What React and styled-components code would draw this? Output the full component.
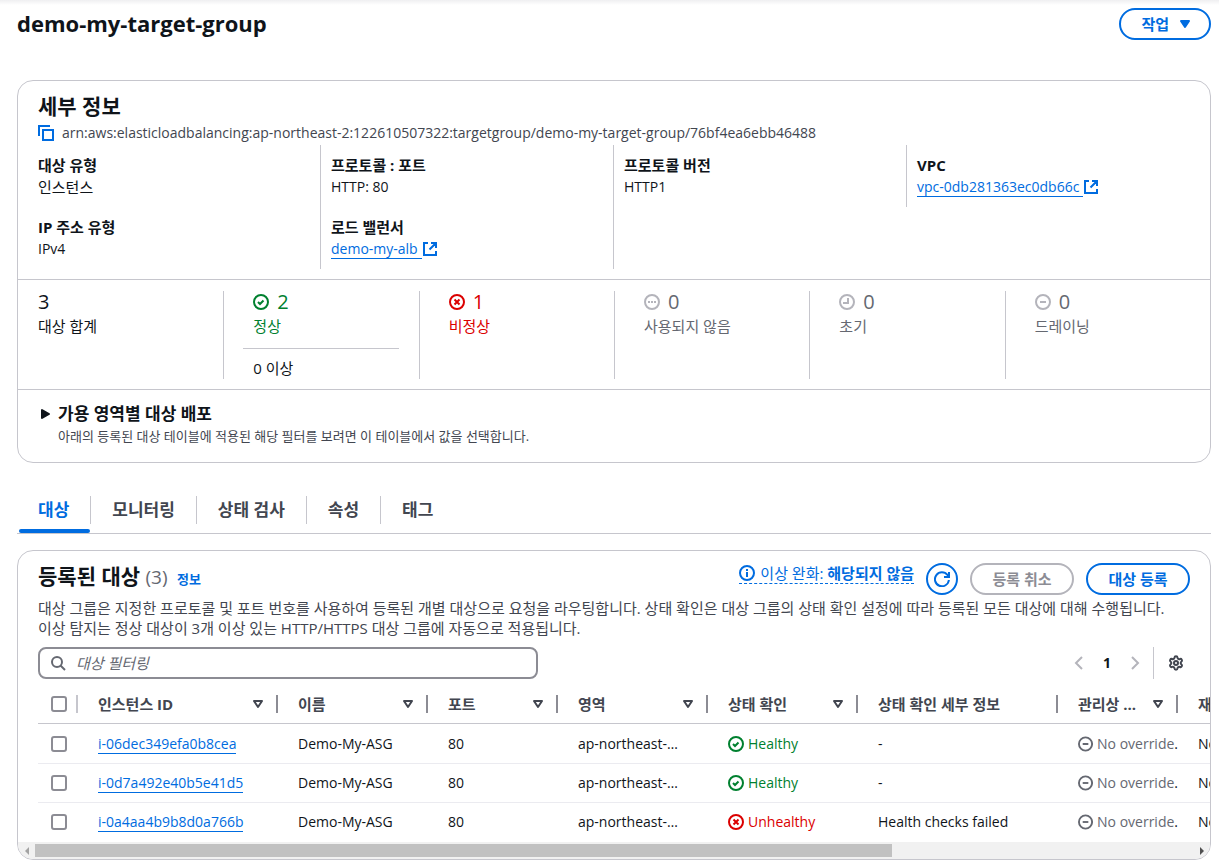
import React from "react";
import styled, { createGlobalStyle } from "styled-components";
import { Settings } from "lucide-react";

const GlobalStyle = createGlobalStyle`
  * {
    box-sizing: border-box;
  }
  body {
    margin: 0;
    background: #fff;
    color: #0f141a;
    font-family: "Open Sans", "Noto Sans CJK KR", sans-serif;
    font-size: 14px;
    line-height: 22px;
  }
  button,
  input {
    font-family: inherit;
  }
  h1, h2, h3, p, dl, dt, dd {
    margin: 0;
  }
`;

const Page = styled.main`
  padding: 8px 8px 5px 17px;
  background: linear-gradient(#efeff1, #fff) top / 100% 5px no-repeat;
  overflow: hidden;
`;

const PageHeader = styled.header`
  display: flex;
  align-items: flex-start;
  justify-content: space-between;
  height: 32px;
  margin-bottom: 40px;
  h1 {
    font-size: 22px;
    line-height: 30px;
    font-weight: 700;
  }
`;

const Button = styled.button`
  display: flex;
  align-items: center;
  justify-content: center;
  gap: 8px;
  min-width: ${(p) => (p.$menu ? "0" : "104px")};
  height: 32px;
  padding: ${(p) => (p.$menu ? "0 16px 0 20px" : "0 20px")};
  border: 2px solid #006ce0;
  border-radius: 20px;
  background: #fff;
  color: #006ce0;
  font-size: 15px;
  font-weight: 700;
  line-height: 20px;
  white-space: nowrap;
  &:disabled {
    border-color: #b4b4bb;
    color: #8c8c94;
  }
`;

const RoundButton = styled(Button)`
  width: 32px;
  min-width: 0;
  padding: 0;
`;

const Card = styled.section`
  border: 1px solid #c6c6cd;
  border-radius: 16px;
  background: #fff;
  overflow: hidden;
`;

const CardTitle = styled.h2`
  margin-bottom: 2px;
  font-size: 21px;
  line-height: 26px;
  font-weight: 700;
  span {
    color: #656871;
    font-size: 19px;
    font-weight: 400;
  }
  a {
    margin-left: 4px;
    color: #006ce0;
    font-size: 13px;
    text-decoration: none;
  }
`;

const CardTop = styled.div`
  padding: 12px 20px 0;
`;

const ArnRow = styled.div`
  display: flex;
  align-items: center;
  gap: 8px;
  height: 24px;
  color: #424650;
`;

const IconButton = styled.button`
  display: flex;
  align-items: center;
  justify-content: center;
  width: 16px;
  height: 16px;
  padding: 0;
  border: 0;
  background: none;
  color: ${(p) => p.$color || "#006ce0"};
`;

const Details = styled.div`
  display: grid;
  grid-template-columns: repeat(4, 1fr);
  align-items: start;
  padding: 0 10px 10px;
`;

const DetailColumn = styled.dl`
  border-right: 1px solid #c6c6cd;
  &:last-child {
    border-right: 0;
  }
  div {
    padding: 9px 10px;
  }
  dt {
    font-size: 15px;
    font-weight: 700;
  }
`;

const KoreanText = styled.span`
  display: block;
  font-size: 15px;
`;

const Link = styled.a`
  color: #006ce0;
  text-decoration: none;
  border-bottom: 1px solid #006ce0;
`;

const ExternalLink = styled.a`
  display: flex;
  align-items: center;
  height: 22px;
  color: #006ce0;
  text-decoration: none;
  span {
    padding-right: 4px;
    line-height: 19px;
    border-bottom: 1px solid #006ce0;
  }
`;

const Stats = styled.div`
  display: grid;
  grid-template-columns: repeat(6, 1fr);
  padding: 11px 10px 10px;
  border-top: 1px solid #c6c6cd;
`;

const Stat = styled.div`
  min-height: 88px;
  padding: 0 20px 0 19px;
  color: ${(p) => p.$color};
  border-left: 1px solid #c6c6cd;
  &:first-child {
    padding-left: 0;
    border-left: 0;
  }
`;

const StatValue = styled.div`
  display: flex;
  align-items: center;
  gap: 8px;
  height: 22px;
  padding-left: 10px;
  font-size: 20px;
  svg {
    color: ${(p) => p.$iconColor};
  }
`;

const StatLabel = styled.div`
  padding-left: 10px;
  font-size: 15px;
  line-height: 26px;
`;

const StatExtra = styled.div`
  margin-top: 9px;
  padding: 9px 0 1px 10px;
  border-top: 1px solid #c6c6cd;
  color: #0f141a;
  font-size: 15px;
  line-height: 20px;
`;

const Expandable = styled.div`
  display: grid;
  grid-template-columns: 20px 1fr;
  padding: 12px 20px 16px;
  border-top: 1px solid #c6c6cd;
  button {
    height: 24px;
  }
  h3 {
    font-size: 17px;
    line-height: 24px;
    font-weight: 700;
  }
  p {
    grid-column: 2;
    color: #424650;
    font-size: 13px;
    line-height: 20px;
  }
`;

const Tabs = styled.div`
  display: flex;
  margin: 33px 0 16px;
  border-bottom: 1px solid #c6c6cd;
`;

const Tab = styled.button`
  position: relative;
  height: 28px;
  margin-bottom: 9px;
  padding: 0 21px;
  border: 0;
  border-right: 1px solid #c6c6cd;
  background: none;
  color: ${(p) => (p.$active ? "#006ce0" : "#424650")};
  font-size: 17px;
  font-weight: 700;
  line-height: 28px;
  &:last-child {
    border-right: 0;
  }
  &:after {
    content: "";
    display: ${(p) => (p.$active ? "block" : "none")};
    position: absolute;
    left: 2px;
    right: 0;
    bottom: -9px;
    height: 4px;
    border-radius: 2px;
    background: #006ce0;
  }
`;

const TableHeader = styled.div`
  display: flex;
  justify-content: space-between;
  height: 35px;
`;

const Actions = styled.div`
  display: flex;
  align-items: flex-start;
  gap: 12px;
`;

const Mitigation = styled.button`
  display: flex;
  align-items: center;
  gap: 5px;
  height: 21px;
  padding: 0;
  border: 0;
  border-bottom: 1px dashed #006ce0;
  background: none;
  color: #006ce0;
  font-size: 15px;
  line-height: 20px;
`;

const Description = styled.p`
  color: #424650;
  font-size: 15px;
  line-height: 20px;
  word-break: keep-all;
`;

const Toolbar = styled.div`
  display: flex;
  align-items: center;
  justify-content: space-between;
  margin-top: 9px;
`;

const SearchBox = styled.label`
  display: flex;
  align-items: center;
  gap: 10px;
  width: 500px;
  height: 32px;
  padding: 0 10px;
  border: 2px solid #8c8c94;
  border-radius: 8px;
  color: #656871;
  input {
    flex: 1;
    padding: 0;
    border: 0;
    outline: 0;
    background: none;
    font-size: 15px;
    &::placeholder {
      color: #656871;
      font-style: italic;
    }
  }
`;

const Pagination = styled.div`
  display: flex;
  align-items: center;
  height: 32px;
  padding-right: 6px;
  gap: 8px;
  strong {
    width: 24px;
    text-align: center;
  }
`;

const Preferences = styled.div`
  display: flex;
  align-items: center;
  height: 32px;
  margin-left: 2px;
  padding-left: 14px;
  border-left: 1px solid #c6c6cd;
`;

const TableScroll = styled.div`
  margin-top: 5px;
  padding-left: 20px;
  overflow: hidden;
`;

const Table = styled.table`
  width: 1340px;
  table-layout: fixed;
  border-collapse: separate;
  border-spacing: 0;
  th {
    height: 40px;
    padding: 0;
    border-bottom: 1px solid #c6c6cd;
    color: #424650;
    font-size: 15px;
    text-align: left;
  }
  td {
    height: 39px;
    padding: 0 0 0 20px;
    border-bottom: 1px solid #ebebf0;
    white-space: nowrap;
  }
  tbody tr:first-child td {
    height: 40px;
  }
  tbody tr:last-child td {
    border-bottom-color: transparent;
  }
  td:first-child {
    padding-left: 13px;
  }
`;

const HeadCell = styled.div`
  display: flex;
  align-items: center;
  justify-content: space-between;
  height: 18px;
  padding: ${(p) => (p.$check ? "0 0 0 13px" : "0 10px 0 20px")};
  border-right: 2px solid ${(p) => (p.$check ? "#c6c6cd" : "#8c8c94")};
  white-space: nowrap;
`;

const Checkbox = styled.input`
  appearance: none;
  display: block;
  width: 16px;
  height: 16px;
  margin: 0;
  border: 2px solid #8c8c94;
  border-radius: 3px;
  background: #fff;
`;

const Status = styled.span`
  display: flex;
  align-items: center;
  gap: 4px;
  color: ${(p) => p.$color};
  b {
    margin-left: -4px;
    color: #0f141a;
    font-weight: 400;
  }
`;

const ScrollBar = styled.div`
  display: grid;
  grid-template-columns: 17px 1fr 17px;
  align-items: center;
  height: 17px;
  background: #f1f1f1;
  svg {
    display: block;
    margin: 0 auto;
  }
`;

const Thumb = styled.div`
  width: 74%;
  height: 13px;
  background: #c1c1c1;
`;

const GREEN = "#00802f";
const RED = "#db0000";
const GREY = "#656871";
const LIGHT = "#b4b4bb";

const shapes = {
  ok: <path d="M5 8l2 2 3.5-3.5" />,
  bad: <path d="M5.5 5.5l5 5M10.5 5.5l-5 5" />,
  unused: <path d="M4 8h2M7 8h2M10 8h2" />,
  initial: <path d="M9 4v5H4" />,
  minus: <path d="M5 8h6" />,
  info: <path d="M8 7v5M8 4v2" />,
};

function CircleIcon({ type }) {
  return (
    <svg width="16" height="16" viewBox="0 0 16 16" fill="none" stroke="currentColor" strokeWidth="2">
      <circle cx="8" cy="8" r="7" />
      {shapes[type]}
    </svg>
  );
}

function Icon({ children }) {
  return (
    <svg width="16" height="16" viewBox="0 0 16 16" fill="none" stroke="currentColor" strokeWidth="2">
      {children}
    </svg>
  );
}

function ExternalIcon() {
  return (
    <Icon>
      <path d="M6 2H2v12h12v-4M9 2h5v5M14 2L7.5 8.5" />
    </Icon>
  );
}

function SortIcon() {
  return (
    <Icon>
      <path d="M4 5h8l-4 6z" strokeLinejoin="round" />
    </Icon>
  );
}

const stats = [
  { value: "3", label: "대상 합계", color: "#0f141a" },
  { value: "2", label: "정상", color: GREEN, icon: "ok", extra: "0 이상" },
  { value: "1", label: "비정상", color: RED, icon: "bad" },
  { value: "0", label: "사용되지 않음", color: GREY, icon: "unused", iconColor: LIGHT },
  { value: "0", label: "초기", color: GREY, icon: "initial", iconColor: LIGHT },
  { value: "0", label: "드레이닝", color: GREY, icon: "minus", iconColor: LIGHT },
];

const columns = [
  { label: "인스턴스 ID", width: 200, sort: true },
  { label: "이름", width: 150, sort: true },
  { label: "포트", width: 130, sort: true },
  { label: "영역", width: 150, sort: true },
  { label: "상태 확인", width: 150, sort: true },
  { label: "상태 확인 세부 정보", width: 200 },
  { label: "관리상 ...", width: 120, sort: true },
  { label: "재정의 세부 정보", width: 200 },
];

const targets = [
  { id: "i-06dec349efa0b8cea", healthy: true, details: "-" },
  { id: "i-0d7a492e40b5e41d5", healthy: true, details: "-" },
  { id: "i-0a4aa4b9b8d0a766b", healthy: false, details: "Health checks failed" },
];

const tabs = ["대상", "모니터링", "상태 검사", "속성", "태그"];

function DetailsCard() {
  return (
    <Card>
      <CardTop>
        <CardTitle>세부 정보</CardTitle>
        <ArnRow>
          <IconButton aria-label="ARN 복사">
            <Icon>
              <path d="M1 11V1h11" />
              <path d="M5 5h10v10H5z" />
            </Icon>
          </IconButton>
          arn:aws:elasticloadbalancing:ap-northeast-2:122610507322:targetgroup/demo-my-target-group/76bf4ea6ebb46488
        </ArnRow>
      </CardTop>
      <Details>
        <DetailColumn>
          <div>
            <dt>대상 유형</dt>
            <dd><KoreanText>인스턴스</KoreanText></dd>
          </div>
          <div>
            <dt>IP 주소 유형</dt>
            <dd>IPv4</dd>
          </div>
        </DetailColumn>
        <DetailColumn>
          <div>
            <dt>프로토콜 : 포트</dt>
            <dd>HTTP: 80</dd>
          </div>
          <div>
            <dt>로드 밸런서</dt>
            <dd>
              <ExternalLink href="#alb"><span>demo-my-alb</span><ExternalIcon /></ExternalLink>
            </dd>
          </div>
        </DetailColumn>
        <DetailColumn>
          <div>
            <dt>프로토콜 버전</dt>
            <dd>HTTP1</dd>
          </div>
        </DetailColumn>
        <DetailColumn>
          <div>
            <dt>VPC</dt>
            <dd>
              <ExternalLink href="#vpc"><span>vpc-0db281363ec0db66c</span><ExternalIcon /></ExternalLink>
            </dd>
          </div>
        </DetailColumn>
      </Details>
      <Stats>
        {stats.map((s) => (
          <Stat key={s.label} $color={s.color}>
            <StatValue $iconColor={s.iconColor}>
              {s.icon && <CircleIcon type={s.icon} />}
              {s.value}
            </StatValue>
            <StatLabel>{s.label}</StatLabel>
            {s.extra && <StatExtra>{s.extra}</StatExtra>}
          </Stat>
        ))}
      </Stats>
      <Expandable>
        <IconButton $color="#0f141a" aria-label="펼치기">
          <Icon>
            <path d="M4 4v8l7-4z" fill="currentColor" strokeWidth="2" strokeLinejoin="round" />
          </Icon>
        </IconButton>
        <h3>가용 영역별 대상 배포</h3>
        <p>아래의 등록된 대상 테이블에 적용된 해당 필터를 보려면 이 테이블에서 값을 선택합니다.</p>
      </Expandable>
    </Card>
  );
}

function TargetsTable() {
  return (
    <TableScroll>
      <Table>
        <colgroup>
          <col width="40" />
          {columns.map((c) => (
            <col key={c.label} width={c.width} />
          ))}
        </colgroup>
        <thead>
          <tr>
            <th>
              <HeadCell $check>
                <Checkbox type="checkbox" aria-label="모두 선택" />
              </HeadCell>
            </th>
            {columns.map((c) => (
              <th key={c.label}>
                <HeadCell>
                  {c.label}
                  {c.sort && <SortIcon />}
                </HeadCell>
              </th>
            ))}
          </tr>
        </thead>
        <tbody>
          {targets.map((t) => (
            <tr key={t.id}>
              <td><Checkbox type="checkbox" aria-label={t.id} /></td>
              <td><Link href={"#" + t.id}>{t.id}</Link></td>
              <td>Demo-My-ASG</td>
              <td>80</td>
              <td>ap-northeast-…</td>
              <td>
                <Status $color={t.healthy ? GREEN : RED}>
                  <CircleIcon type={t.healthy ? "ok" : "bad"} />
                  {t.healthy ? "Healthy" : "Unhealthy"}
                </Status>
              </td>
              <td>{t.details}</td>
              <td>
                <Status $color={GREY}>
                  <CircleIcon type="minus" />
                  No override<b>.</b>
                </Status>
              </td>
              <td>No override</td>
            </tr>
          ))}
        </tbody>
      </Table>
    </TableScroll>
  );
}

function TargetsCard() {
  return (
    <Card>
      <CardTop>
        <TableHeader>
          <CardTitle>
            등록된 대상 <span>(3)</span> <a href="#info">정보</a>
          </CardTitle>
          <Actions>
            <Mitigation>
              <CircleIcon type="info" />
              <span>이상 완화: <strong>해당되지 않음</strong></span>
            </Mitigation>
            <RoundButton aria-label="새로 고침">
              <Icon>
                <path d="M14.9 9A7 7 0 1 1 13.5 4L15 6M15 1v5h-5" />
              </Icon>
            </RoundButton>
            <Button disabled>등록 취소</Button>
            <Button>대상 등록</Button>
          </Actions>
        </TableHeader>
        <Description>
          대상 그룹은 지정한 프로토콜 및 포트 번호를 사용하여 등록된 개별 대상으로 요청을 라우팅합니다. 상태 확인은 대상 그룹의 상태 확인 설정에 따라 등록된 모든 대상에 대해 수행됩니다. 이상 탐지는 정상 대상이 3개 이상 있는 HTTP/HTTPS 대상 그룹에 자동으로 적용됩니다.
        </Description>
        <Toolbar>
          <SearchBox>
            <Icon>
              <circle cx="7" cy="7" r="5" />
              <path d="M10.5 10.5L15 15" />
            </Icon>
            <input type="text" placeholder="대상 필터링" aria-label="대상 필터링" />
          </SearchBox>
          <Pagination>
            <IconButton $color={LIGHT} aria-label="이전">
              <Icon><path d="M11 2L5 8l6 6" /></Icon>
            </IconButton>
            <strong>1</strong>
            <IconButton $color={LIGHT} aria-label="다음">
              <Icon><path d="M5 2l6 6-6 6" /></Icon>
            </IconButton>
            <Preferences>
              <IconButton $color="#424650" aria-label="기본 설정">
                <Settings size={18} strokeWidth={3} />
              </IconButton>
            </Preferences>
          </Pagination>
        </Toolbar>
      </CardTop>
      <TargetsTable />
      <ScrollBar>
        <svg width="6" height="8" viewBox="0 0 6 8"><path d="M5 0v8L1 4z" fill="#a3a3a3" /></svg>
        <Thumb />
        <svg width="6" height="8" viewBox="0 0 6 8"><path d="M1 0v8l4-4z" fill="#505050" /></svg>
      </ScrollBar>
    </Card>
  );
}

function App() {
  return (
    <>
      <GlobalStyle />
      <Page>
        <PageHeader>
          <h1>demo-my-target-group</h1>
          <Button $menu>
            작업
            <Icon>
              <path d="M4 5h8l-4 6z" fill="currentColor" strokeLinejoin="round" />
            </Icon>
          </Button>
        </PageHeader>
        <DetailsCard />
        <Tabs role="tablist">
          {tabs.map((t, i) => (
            <Tab key={t} role="tab" aria-selected={i === 0} $active={i === 0}>
              {t}
            </Tab>
          ))}
        </Tabs>
        <TargetsCard />
      </Page>
    </>
  );
}

export default App;
